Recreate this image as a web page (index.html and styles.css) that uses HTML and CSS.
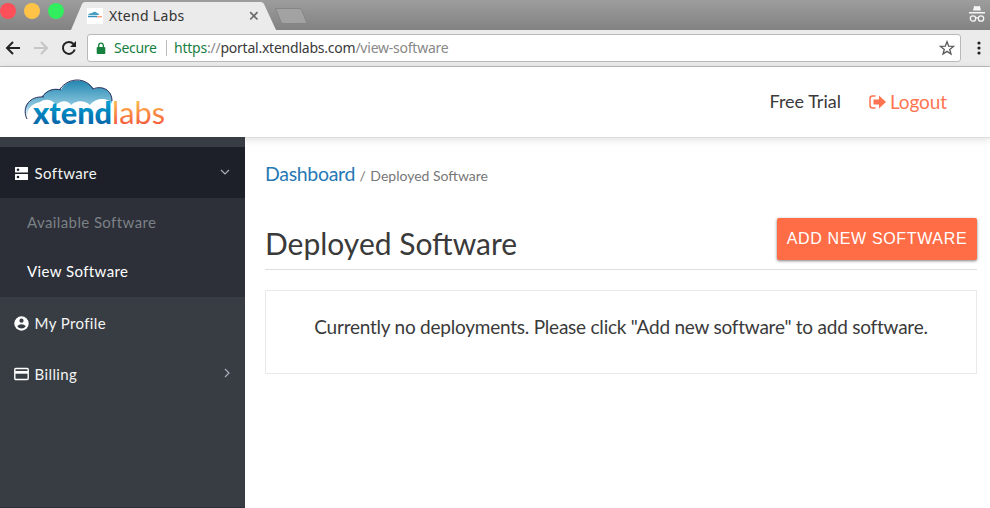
FILE: index.html
```html
<!DOCTYPE html>
<html lang="en">
<head>
<meta charset="utf-8">
<title>Xtend Labs</title>
<link rel="stylesheet" href="styles.css">
</head>
<body>
<div class="tabstrip">
  <div class="lights"><i class="red"></i><i class="yellow"></i><i class="green"></i></div>
  <div class="tab">
    <svg class="tab-shape" width="206" height="30" viewBox="0 0 206 30"><path d="M0 30 L11 4 Q12 2 14 2 H190 Q192 2 193 4 L205 30Z" fill="#ebebeb"/></svg>
    <svg class="favicon" width="16" height="16" viewBox="0 0 16 16"><path fill="#fff" d="M0 0h16v16H0z"/><path d="M1 7Q2 5 5 5Q8 2.500 10 5Q12 5 12 7Z" fill="#459fc1"/><path d="M1 8.500h9" stroke="#368fb9" stroke-width="1.500"/><path d="M10 8.700h5" stroke="#f5a17f" stroke-width="1.500"/></svg>
    <span class="tab-title">Xtend Labs</span>
    <svg class="close" width="10" height="10" viewBox="0 0 10 10"><path d="M1.200 1.200l7.300 7.300M8.500 1.200L1.200 8.500" stroke="#6b6b6b" stroke-width="1.700"/></svg>
  </div>
  <svg class="newtab" width="34" height="17" viewBox="0 0 34 17"><path d="M1.500.5H25Q27 .5 28 2.500L33 15.500H9Q7.500 15.500 7 14Z" fill="#a2a2a2" stroke="#858585"/></svg>
  <svg class="incognito" width="18" height="18" viewBox="0 0 18 18"><path d="M5 5.500L6.200.8Q9 1.800 11.800.8L13 5.500ZM1 7h16v1.500H1z" fill="#f5f5f5"/><g fill="none" stroke="#f5f5f5" stroke-width="1.300"><circle cx="5" cy="13.500" r="2.700"/><circle cx="13" cy="13.500" r="2.700"/><path d="M7.700 13q1.300-.8 2.600 0"/></g></svg>
</div>
<div class="toolbar">
  <svg class="nav-icon" width="16" height="16" viewBox="0 0 16 16"><path d="M15 8H2M8 2L2 8l6 6" fill="none" stroke="#222" stroke-width="2"/></svg>
  <svg class="nav-icon" width="16" height="16" viewBox="0 0 16 16"><path d="M1 8h13M8 2l6 6-6 6" fill="none" stroke="#c5c5c5" stroke-width="2"/></svg>
  <svg class="nav-icon" width="16" height="16" viewBox="0 0 16 16"><path d="M13.700 9.500A6 6 0 1 1 12.500 4" fill="none" stroke="#222" stroke-width="2"/><path d="M15 1v6H9Z" fill="#222"/></svg>
  <div class="address">
    <svg class="lock" width="10" height="13" viewBox="0 0 10 13"><rect x=".7" y="5" width="8.600" height="7" rx="1" fill="#17803f"/><path d="M2.700 6V3.500a2.300 2.300 0 0 1 4.600 0V6" fill="none" stroke="#17803f" stroke-width="1.300"/></svg>
    <span class="secure">Secure</span><i class="divider"></i>
    <span class="url"><span class="scheme">https</span><span class="muted">://</span>portal.xtendlabs.com<span class="muted">/view-software</span></span>
    <svg class="star" width="16" height="16" viewBox="0 0 16 16"><path d="M8 1.700l1.700 4.500 4.800.2-3.800 3 1.300 4.600L8 11.400 4 14l1.300-4.600-3.800-3 4.800-.2Z" fill="none" stroke="#5a5a5a" stroke-width="1.300"/></svg>
  </div>
  <svg class="kebab" width="4" height="14" viewBox="0 0 4 14"><g fill="#222"><circle cx="2" cy="2" r="1.600"/><circle cx="2" cy="7" r="1.600"/><circle cx="2" cy="12" r="1.600"/></g></svg>
</div>
<header class="header">
  <svg class="logo" width="150" height="60" viewBox="0 0 150 60">
    <defs>
      <linearGradient id="sky" x2="0" y2="1"><stop offset="0" stop-color="#2386b0"/><stop offset=".7" stop-color="#8cc8e0"/><stop offset="1" stop-color="#fff"/></linearGradient>
      <linearGradient id="blue" gradientUnits="userSpaceOnUse" x1="0" y1="27" x2="0" y2="49"><stop offset="0" stop-color="#00a0d0"/><stop offset="1" stop-color="#0763a8"/></linearGradient>
      <linearGradient id="orange" gradientUnits="userSpaceOnUse" x1="0" y1="27" x2="0" y2="49"><stop offset="0" stop-color="#fdb54d"/><stop offset="1" stop-color="#f4593c"/></linearGradient>
    </defs>
    <path d="M4 41C-1 31 7 21 20 21C24 14 32 12 39 13.500C46 1.500 64 1.500 72 13C82 9 90 15 90 24V36H8Z" fill="url(#sky)"/>
    <path d="M5 43C0 33 6 21 19 21Q20 20.500 22 21M20 21C25 14 32 12 39 14M38 13C47 1 64 1 71 13M71 13C80 9 90 14 90 25" fill="none" stroke="#292c5a" stroke-width="1"/>
    <path d="M7 45C3 35 8 28 18 26C24 22 31 24 34 29C39 24 46 24 49 29C55 23 64 25 68 29C74 21 88 21 91 30V45Z" fill="#fff"/>
    <text class="logo-x" x="11" y="47.500" textLength="79" lengthAdjust="spacingAndGlyphs" fill="url(#blue)">xtend</text>
    <text class="logo-l" x="90" y="47.500" textLength="53" lengthAdjust="spacingAndGlyphs" fill="url(#orange)">labs</text>
  </svg>
  <span class="plan">Free Trial</span>
  <a class="logout"><svg width="17" height="14" viewBox="0 0 17 14"><path d="M6.500 1H3.500Q1 1 1 3.500v7Q1 13 3.500 13h3" fill="none" stroke="#ff7450" stroke-width="1.500"/><path d="M4.500 4.500H10V.5l7 6.500-7 6.500V9.500H4.500Z" fill="#ff7450"/></svg><span>Logout</span></a>
</header>
<div class="layout">
  <nav class="sidebar">
    <a class="item open"><svg class="icon" width="15" height="15" viewBox="0 0 15 15"><path fill="#fff" fill-rule="evenodd" d="M1.500 1h12q.5 0 .5.500v4.500q0 .5-.5.500h-12Q1 6.500 1 6V1.500Q1 1 1.500 1ZM4 2.500A1.300 1.300 0 1 0 4 5.100 1.300 1.300 0 1 0 4 2.500ZM1.500 8h12q.5 0 .5.500V13.500q0 .5-.5.500h-12Q1 14 1 13.500V8.500Q1 8 1.500 8ZM4 9.700A1.300 1.300 0 1 0 4 12.300 1.300 1.300 0 1 0 4 9.700Z"/></svg><span>Software</span><svg class="chev" width="10" height="10" viewBox="0 0 10 10"><path d="M1 3l4 4 4-4" fill="none" stroke="#aab0b8" stroke-width="1.200"/></svg></a>
    <div class="submenu"><a class="sub dim">Available Software</a><a class="sub">View Software</a></div>
    <a class="item"><svg class="icon" width="15" height="15" viewBox="0 0 15 15"><circle cx="7.500" cy="7.500" r="7.200" fill="#fff"/><circle cx="7.500" cy="4.700" r="2.100" fill="#373d43"/><path d="M3.200 10.200Q4.700 8.300 7.500 8.300T11.800 10.200Q10.300 12.500 7.500 12.500T3.200 10.200Z" fill="#373d43"/></svg><span>My Profile</span></a>
    <a class="item"><svg class="icon" width="15" height="15" viewBox="0 0 15 15"><rect x=".8" y="1.500" width="13.400" height="11" rx="1" fill="none" stroke="#fff" stroke-width="1.400"/><path d="M1 4h13v2.700H1z" fill="#fff"/></svg><span>Billing</span><svg class="chev right" width="10" height="10" viewBox="0 0 10 10"><path d="M3 1l4 4-4 4" fill="none" stroke="#aab0b8" stroke-width="1.200"/></svg></a>
  </nav>
  <main class="content">
    <div class="crumbs"><a>Dashboard</a><span class="slash">/</span><span class="current">Deployed Software</span></div>
    <div class="heading"><h1>Deployed Software</h1><button>ADD NEW SOFTWARE</button></div>
    <div class="panel">Currently no deployments. Please click "Add new software" to add software.</div>
  </main>
</div>
</body>
</html>
```
FILE: styles.css
```css
* { box-sizing: border-box; }
body { margin: 0; height: 508px; overflow: hidden; display: flex; flex-direction: column; background: #fff; color: #3a3a3a; font-family: Lato, sans-serif; }
svg { display: block; flex: none; }
span, a, h1 { white-space: nowrap; }

.tabstrip { height: 30px; flex: none; display: flex; background: linear-gradient(#9d9d9d, #828282); font-family: "Noto Sans", sans-serif; }
.lights { display: flex; gap: 8px; padding-top: 3px; width: 71px; }
.lights i { width: 16px; height: 16px; flex: none; border-radius: 50%; }
.lights .red { background: #ff4f58; }
.lights .yellow { background: #ffc348; }
.lights .green { background: #32ed5d; }
.tab { position: relative; width: 206px; height: 30px; display: flex; align-items: center; padding: 2px 0 0 16px; }
.tab-shape { position: absolute; left: 0; top: 0; }
.favicon, .tab-title, .close { position: relative; }
.tab-title { width: 139px; margin: -2px 0 0 6px; font-size: 14px; letter-spacing: .3px; color: #333; }
.close { margin-left: 1px; }
.newtab { margin: 8px 0 0 -3px; }
.incognito { margin: 5px 4px 0 auto; }

.toolbar { height: 37px; flex: none; display: flex; align-items: center; background: #ebebeb; border-bottom: 1px solid #bababa; padding-left: 5px; font-family: "Noto Sans", sans-serif; }
.nav-icon { margin-right: 12px; }
.address { width: 874px; height: 28px; margin-left: -2px; display: flex; align-items: center; background: #fff; border: 1px solid #b9b9b9; border-radius: 3px; font-size: 14px; }
.lock { margin-left: 8px; }
.secure, .url { margin-top: -2px; }
.secure { width: 52px; margin-left: 8px; letter-spacing: -.3px; color: #17803f; }
.divider { width: 1px; height: 16px; background: #bbb; margin-right: 7px; }
.url { letter-spacing: -.23px; }
.scheme { color: #17803f; }
.muted { color: #888; }
.star { margin: 0 5px 0 auto; }
.kebab { margin-left: 16px; }

.header { height: 70px; flex: none; position: relative; z-index: 1; display: flex; align-items: center; background: #fff; box-shadow: 0 1px 0 #ddd, 0 2px 8px rgba(0,0,0,.14); }
.logo { margin: 8px 0 0 22px; }
.logo-x { font: 900 31px Lato, sans-serif; }
.logo-l { font: 400 31px Lato, sans-serif; }
.plan { margin: -2px 28px 0 auto; font-size: 18px; }
.logout { display: flex; align-items: center; gap: 4px; margin: -1px 43px 0 0; color: #ff7450; font-size: 19px; letter-spacing: -.1px; }
.logout span { margin-top: -1px; }

.layout { flex: 1; display: flex; min-height: 0; }
.sidebar { width: 245px; position: relative; z-index: 2; padding-top: 10px; background: #373d43; border-bottom: 1px solid #2c3037; color: #fff; font-size: 15px; letter-spacing: .4px; }
.item { height: 51px; display: flex; align-items: center; padding: 1px 14px 0; color: #f4f4f4; }
.item span { margin-left: 5.500px; }
.open { background: #1d2028; }
.chev { margin: -3px 1px 0 auto; }
.item .right { margin: -2px -1px 0 auto; }
.submenu { height: 99px; background: #2d3038; }
.sub { height: 49px; display: flex; align-items: center; padding: 0 0 2px 27px; }
.dim { color: #7c8087; }

.content { width: 712px; margin: 0 13px 0 20px; }
.crumbs { height: 81px; padding-top: 25px; display: flex; align-items: baseline; }
.crumbs a { font-size: 19.500px; letter-spacing: -.32px; color: #2679b5; }
.slash, .current { font-size: 14px; color: #777; }
.slash { margin: 0 4.500px; }
.heading { height: 52px; display: flex; align-items: flex-start; justify-content: space-between; border-bottom: 1px solid #ddd; }
h1 { margin: 6px 0 0; font-size: 30px; line-height: 38px; font-weight: 400; }
button { width: 200px; height: 42px; padding: 0; border: 0; border-radius: 2px; background: #ff6d47; box-shadow: 0 1px 3px rgba(0,0,0,.5); color: #fff; font: 16px "Liberation Sans", sans-serif; letter-spacing: .65px; }
.panel { height: 84px; margin-top: 20px; padding-top: 24px; border: 1px solid #e9e9e9; text-align: center; font-size: 19px; letter-spacing: -.23px; line-height: 24px; white-space: nowrap; }
```
